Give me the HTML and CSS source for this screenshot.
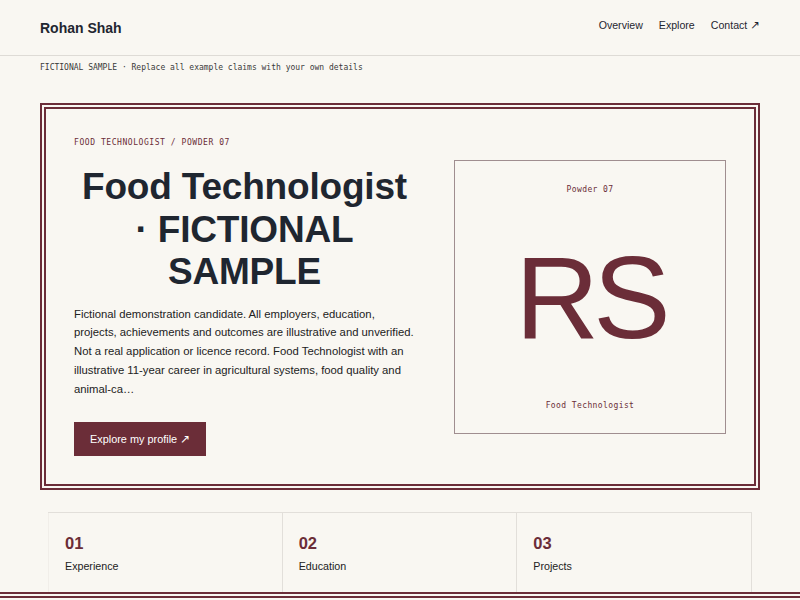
FILE: index.html
```html
<!DOCTYPE html>
<html lang="en">
<head>
<meta charset="utf-8">
<title>Rohan Shah</title>
<link rel="stylesheet" href="styles.css">
</head>
<body>
<header class="site-header">
  <div class="brand">Rohan Shah</div>
  <nav class="nav">
    <a href="#overview">Overview</a>
    <a href="#explore">Explore</a>
    <a href="#contact">Contact <span class="arrow">↗</span></a>
  </nav>
</header>
<main class="page">
  <p class="notice">FICTIONAL SAMPLE · Replace all example claims with your own details</p>
  <section class="hero">
    <div class="hero-text">
      <p class="eyebrow">FOOD TECHNOLOGIST / POWDER 07</p>
      <h1 class="title">Food Technologist · FICTIONAL SAMPLE</h1>
      <p class="lede">Fictional demonstration candidate. All employers, education, projects, achievements and outcomes are illustrative and unverified. Not a real application or licence record. Food Technologist with an illustrative 11-year career in agricultural systems, food quality and animal-ca…</p>
      <a class="button" href="#profile">Explore my profile <span class="arrow">↗</span></a>
    </div>
    <div class="panel">
      <span class="panel-label">Powder 07</span>
      <span class="monogram">RS</span>
      <span class="panel-label">Food Technologist</span>
    </div>
  </section>
  <section class="cards">
    <div class="card"><span class="card-num">01</span><span class="card-label">Experience</span></div>
    <div class="card"><span class="card-num">02</span><span class="card-label">Education</span></div>
    <div class="card"><span class="card-num">03</span><span class="card-label">Projects</span></div>
  </section>
</main>
<div class="rule"></div>
</body>
</html>
```
FILE: styles.css
```css
html, body {
  margin: 0;
  padding: 0;
  background: #f9f7f2;
  color: #1f2630;
  font-family: "Liberation Sans", Arial, sans-serif;
}

.site-header {
  height: 55px;
  border-bottom: 1px solid #dedbd6;
  display: flex;
  align-items: center;
  justify-content: space-between;
  padding: 0 40px;
}

.brand {
  font-size: 14px;
  font-weight: 700;
  color: #1f2630;
  padding-top: 1px;
}

.nav {
  display: flex;
  align-items: baseline;
  gap: 16px;
  margin-top: -5px;
}

.nav a {
  font-size: 10.6px;
  line-height: 14px;
  color: #1f2630;
  text-decoration: none;
}

.arrow {
  font-family: "DejaVu Sans", sans-serif;
  font-size: 1.1em;
  line-height: 1;
}

.page {
  padding: 0 40px;
}

.notice {
  margin: 0;
  padding-top: 6px;
  font-family: "DejaVu Sans Mono", monospace;
  font-size: 8px;
  line-height: 12px;
  color: #3a3a3a;
}

.hero {
  margin-top: 29px;
  border: 6px double #6b2d38;
  padding: 28px 28px;
  display: grid;
  grid-template-columns: 341px 272px;
  column-gap: 39px;
  align-items: center;
}

.eyebrow {
  margin: 0;
  font-family: "DejaVu Sans Mono", monospace;
  font-size: 8px;
  line-height: 12px;
  letter-spacing: 0.07em;
  color: #6b2d38;
}

.title {
  margin: 17px 0 0;
  text-align: center;
  font-size: 37px;
  line-height: 42.5px;
  font-weight: 700;
  letter-spacing: -0.005em;
  color: #1f2630;
}

.lede {
  margin: 11px 0 0;
  font-size: 11.3px;
  line-height: 18.75px;
  color: #222;
  width: 342px;
}

.button {
  display: inline-block;
  margin-top: 24px;
  background: #6b2d38;
  color: #fff;
  text-decoration: none;
  font-size: 10.9px;
  height: 34px;
  line-height: 34px;
  padding: 0 16px;
}

.panel {
  height: 274px;
  border: 1px solid #a08e90;
  display: flex;
  flex-direction: column;
  align-items: center;
  justify-content: space-between;
  padding: 23px 0 21px;
  box-sizing: border-box;
  color: #6b2d38;
}

.panel-label {
  font-family: "DejaVu Sans Mono", monospace;
  font-size: 8px;
  line-height: 12px;
  letter-spacing: 0.05em;
  color: #6b2d38;
}

.monogram {
  font-size: 116px;
  line-height: 1;
  font-weight: 400;
  letter-spacing: -0.05em;
  color: #6b2d38;
}

.cards {
  margin: 22px 8px 0;
  border-top: 1px solid #e2dfda;
  display: grid;
  grid-template-columns: repeat(3, 1fr);
}

.card {
  display: flex;
  flex-direction: column;
  padding: 20px 16px 0;
  height: 59px;
  border-right: 1px solid #e2dfda;
}

.card:first-child {
  border-left: 1px solid #f1eee9;
}

.card-num {
  font-size: 16.5px;
  line-height: 20px;
  font-weight: 700;
  color: #6b2d38;
}

.card-label {
  margin-top: 5px;
  font-size: 10.7px;
  line-height: 16px;
  color: #222;
}

.rule {
  border-top: 6px double #6b2d38;
  height: 40px;
}
```
